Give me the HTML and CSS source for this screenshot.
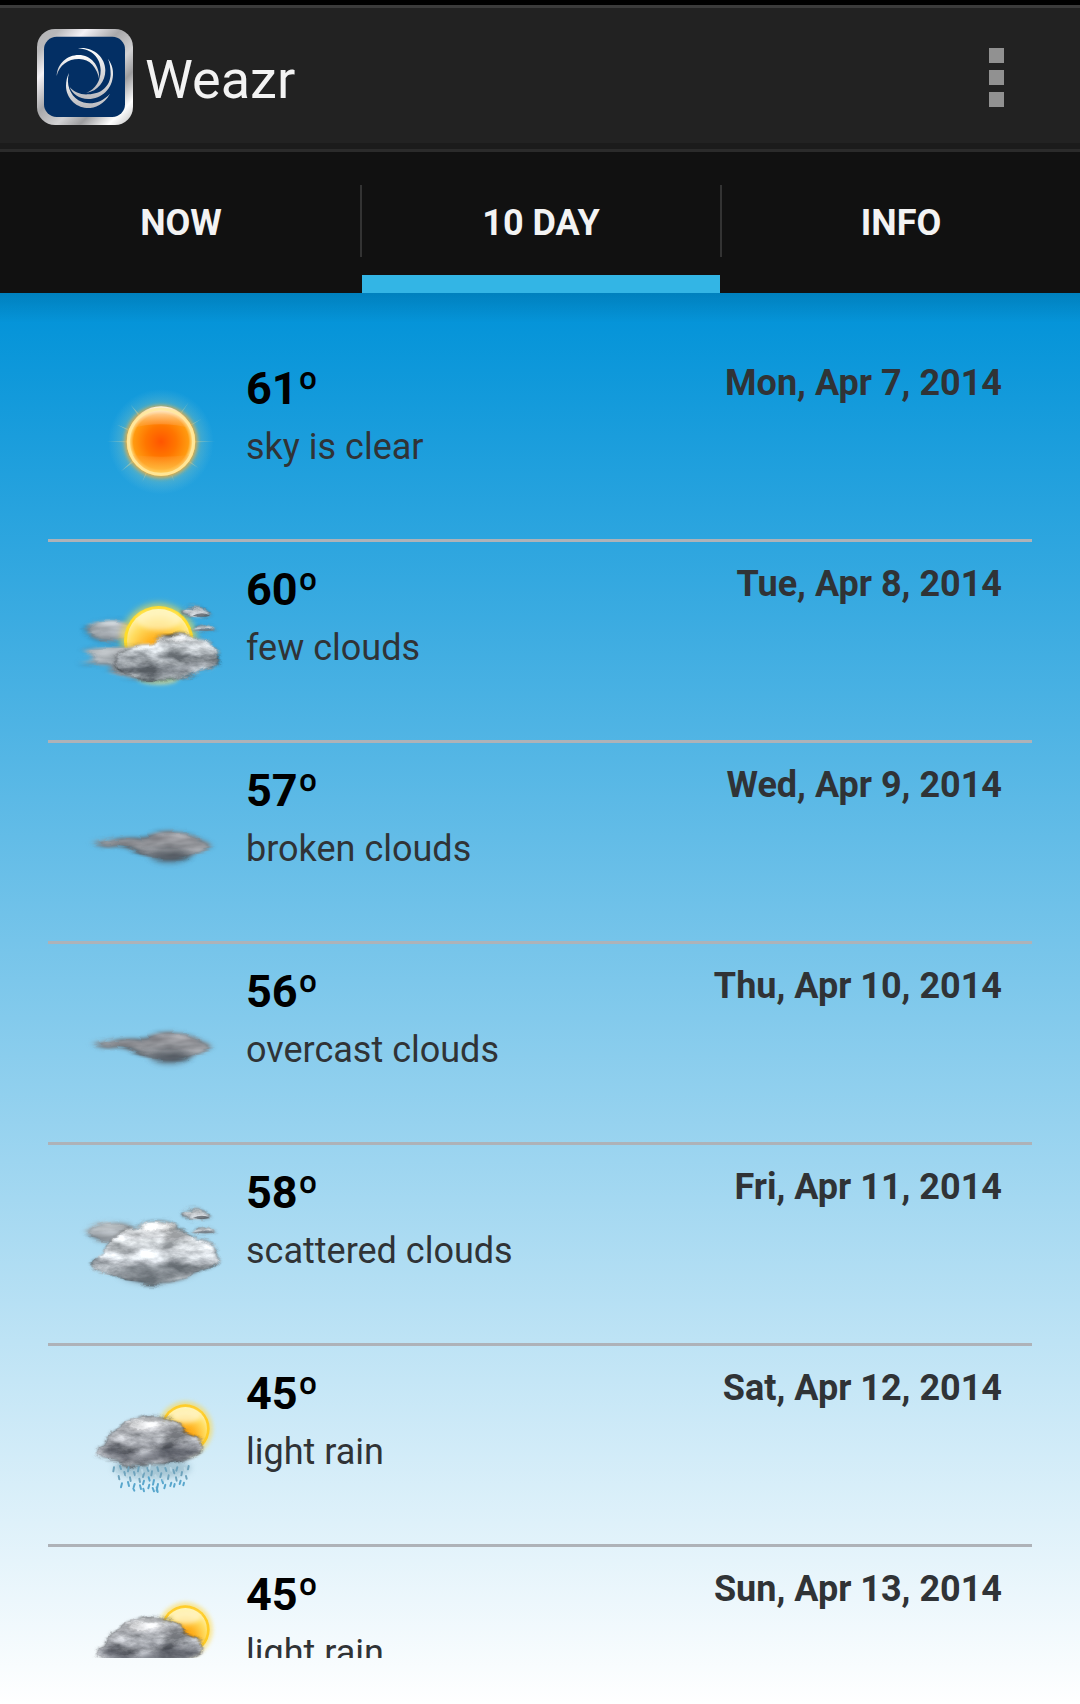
FILE: index.html
```html
<!DOCTYPE html>
<html lang="en">
<head>
<meta charset="utf-8">
<meta name="viewport" content="width=device-width, initial-scale=1">
<title>Weazr</title>
<link rel="stylesheet" href="styles.css">
</head>
<body>
<svg class="defs" width="0" height="0" aria-hidden="true">
  <defs>
    <radialGradient id="sunGlow">
      <stop offset=".62" stop-color="#ffd878" stop-opacity=".95"/>
      <stop offset=".74" stop-color="#cfd8a0" stop-opacity=".5"/>
      <stop offset="1" stop-color="#9fd8e0" stop-opacity="0"/>
    </radialGradient>
    <radialGradient id="hotSun">
      <stop offset="0" stop-color="#ff5500"/>
      <stop offset=".45" stop-color="#ff7600"/>
      <stop offset=".8" stop-color="#ff9a10"/>
      <stop offset=".92" stop-color="#ffdf85"/>
      <stop offset="1" stop-color="#ffcf60"/>
    </radialGradient>
    <linearGradient id="sunGloss" x1="0" y1="0" x2="0" y2="1">
      <stop offset="0" stop-color="#fff8e8" stop-opacity=".95"/>
      <stop offset="1" stop-color="#ffb070" stop-opacity=".1"/>
    </linearGradient>
    <linearGradient id="sunFoot" x1="0" y1="0" x2="0" y2="1">
      <stop offset="0" stop-color="#ffa040" stop-opacity=".2"/>
      <stop offset="1" stop-color="#ffce50" stop-opacity=".9"/>
    </linearGradient>
    <radialGradient id="softSun" cx=".5" cy=".68" r=".68">
      <stop offset="0" stop-color="#ff9c08"/>
      <stop offset=".35" stop-color="#ffb424"/>
      <stop offset=".7" stop-color="#ffdc60"/>
      <stop offset="1" stop-color="#fff6b8"/>
    </radialGradient>
    <linearGradient id="paleCloud" x1="0" y1="0" x2="0" y2="1">
      <stop offset="0" stop-color="#eceeef"/>
      <stop offset=".5" stop-color="#c9ced3"/>
      <stop offset=".8" stop-color="#9fa5ab"/>
      <stop offset="1" stop-color="#b3bac0"/>
    </linearGradient>
    <linearGradient id="grayCloud" x1="0" y1="0" x2="0" y2="1">
      <stop offset="0" stop-color="#d0d4d7"/>
      <stop offset=".4" stop-color="#adb3b8"/>
      <stop offset=".8" stop-color="#92989e"/>
      <stop offset="1" stop-color="#a9b0b5"/>
    </linearGradient>
    <linearGradient id="rainCloud" x1="0" y1="0" x2="0" y2="1">
      <stop offset="0" stop-color="#d3d5d8"/>
      <stop offset=".5" stop-color="#adb0b6"/>
      <stop offset=".8" stop-color="#7c7f86"/>
      <stop offset="1" stop-color="#a2a5aa"/>
    </linearGradient>
    <linearGradient id="darkCloud" x1="0" y1="0" x2="0" y2="1">
      <stop offset="0" stop-color="#a3a2a7"/>
      <stop offset=".5" stop-color="#8e9095"/>
      <stop offset=".8" stop-color="#6b7178"/>
      <stop offset="1" stop-color="#7d868e"/>
    </linearGradient>
    <filter id="blur2" x="-30%" y="-30%" width="160%" height="160%"><feGaussianBlur stdDeviation="2"/></filter>
    <filter id="blur6" x="-40%" y="-60%" width="180%" height="220%"><feGaussianBlur stdDeviation="6"/></filter>
    <filter id="blur10" x="-40%" y="-60%" width="180%" height="220%"><feGaussianBlur stdDeviation="10"/></filter>
    <filter id="billow" x="-15%" y="-15%" width="130%" height="130%" color-interpolation-filters="sRGB">
      <feTurbulence type="fractalNoise" baseFrequency=".013 .028" numOctaves="5" seed="8" result="n"/>
      <feGaussianBlur in="SourceGraphic" stdDeviation="4" result="s"/>
      <feDisplacementMap in="s" in2="n" scale="26" xChannelSelector="R" yChannelSelector="G" result="d"/>
      <feColorMatrix in="n" type="matrix" values="0 0 1.8 0 -.4  0 0 1.8 0 -.4  0 0 1.8 0 -.4  0 0 0 0 1" result="g"/>
      <feComposite in="d" in2="g" operator="arithmetic" k2="1" k3=".5" k4="-.25" result="m"/>
      <feComposite in="m" in2="d" operator="in"/>
    </filter>
    <filter id="wisp" x="-20%" y="-40%" width="140%" height="180%" color-interpolation-filters="sRGB">
      <feTurbulence type="fractalNoise" baseFrequency=".008 .03" numOctaves="3" seed="3" result="n"/>
      <feGaussianBlur in="SourceGraphic" stdDeviation="10 6" result="s"/>
      <feDisplacementMap in="s" in2="n" scale="18" xChannelSelector="R" yChannelSelector="G" result="d"/>
      <feColorMatrix in="n" type="matrix" values="0 0 1.5 0 -.25  0 0 1.5 0 -.25  0 0 1.5 0 -.25  0 0 0 0 1" result="g"/>
      <feComposite in="d" in2="g" operator="arithmetic" k2="1" k3=".25" k4="-.12" result="m"/>
      <feComposite in="m" in2="d" operator="in"/>
    </filter>

    <symbol id="clear" viewBox="66 0 180 198">
      <g transform="translate(40 -1) scale(.3333)">
        <circle cx="363" cy="305" r="158" fill="url(#sunGlow)" opacity=".45"/>
        <path d="M200 305l163-4 163 4-163 4zM272 194l91 100 84-108-76 112 114-62-108 70 98 78-106-66 34 108-44-104-52 104 40-108-104 76 92-86-104-54 114 44z" fill="#ffe6a0" opacity=".35" filter="url(#blur2)"/>
        <circle cx="363" cy="305" r="108" fill="#f0a830" opacity=".9" filter="url(#blur6)"/>
        <circle cx="363" cy="305" r="103" fill="url(#hotSun)"/>
        <path d="M270 266a98 98 0 0 1 186 0q-93-26-186 0z" fill="url(#sunGloss)"/>
        <path d="M275 344a94 94 0 0 0 176 0q-88 12-176 0z" fill="url(#sunFoot)"/>
        <circle cx="363" cy="305" r="98" fill="none" stroke="#ffeaa0" stroke-width="9" opacity=".85" filter="url(#blur2)"/>
      </g>
    </symbol>

    <symbol id="puffs" viewBox="0 0 600 390">
      <g filter="url(#billow)">
        <path d="M356 132q14-24 44-23 30-2 40 12 14 8 16 16-30 8-60 4-26 0-40-9z" fill="url(#paleCloud)"/>
        <path d="M392 178q14-18 42-14 26 0 36 14-16 10-40 8-26 0-38-8z" fill="url(#paleCloud)"/>
      </g>
      <path d="M398 137q30-14 52 0-24 7-52 0z" fill="#4d525a" opacity=".7" filter="url(#blur2)"/>
      <path d="M400 180q36-8 66 0-30 6-66 0z" fill="#6b7178" opacity=".6" filter="url(#blur2)"/>
    </symbol>

    <symbol id="few" viewBox="66 0 180 198">
      <g transform="translate(60 28) scale(.3333)">
        <path d="M70 180q30-34 80-34 50-2 74 20v44q-60 12-104 4-30-8-50-34z" fill="url(#grayCloud)" filter="url(#wisp)"/>
        <circle cx="296" cy="214" r="114" fill="#ffe040" opacity=".65" filter="url(#blur10)"/>
        <circle cx="296" cy="212" r="104" fill="#ffdc2a" filter="url(#blur2)"/>
        <circle cx="296" cy="212" r="95" fill="url(#softSun)" filter="url(#blur2)"/>
        <ellipse cx="296" cy="150" rx="66" ry="30" fill="#fffbe0" opacity=".5" filter="url(#blur6)"/>
        <path d="M225 320q70 26 140-4l-20 20q-50 14-100 0z" fill="#f4e38a" opacity=".8" filter="url(#blur6)"/>
        <path d="M66 240q60-16 160-10 100 0 180 20l-20 50q-80 44-170 26-60-12-80-28 20 0 10-10-40 0-96-6 60-12 46-18-20-14-30-24z" fill="url(#grayCloud)" filter="url(#wisp)"/>
        <path d="M170 244q50-26 114-24 10-22 48-24 40-16 70 6 46-4 60 24 16 20 14 44 0 24-40 30-40 30-130 32-80 4-130-22-30-34-6-66z" fill="url(#grayCloud)" filter="url(#billow)"/>
        <path d="M190 282q90 34 240-10-50 46-130 46-80-6-110-36z" fill="#5d646c" opacity=".35" filter="url(#blur10)"/>
        <path d="M285 208q12-18 30-10l10 2q40-18 70 6l-50 14q-30 2-60-12z" fill="#eef1f3" opacity=".75" filter="url(#billow)"/>
        <use href="#puffs" width="600" height="390"/>
      </g>
    </symbol>

    <symbol id="overcast" viewBox="66 0 180 198">
      <g transform="translate(60 57) scale(.3333)">
        <path d="M84 128q60-14 100-20 30-4 70 2 40-20 90-18 54 0 80 22 26 6 34 18-10 20-50 32-50 28-110 18-56-10-86-34-30-14-64-4-30-4-64-16z" fill="url(#darkCloud)" filter="url(#wisp)"/>
        <path d="M265 164q60-20 130 0-20 24-70 24-40 0-60-24z" fill="#4a5058" opacity=".6" filter="url(#blur10)"/>
      </g>
    </symbol>

    <symbol id="scattered" viewBox="66 0 180 198">
      <g transform="translate(60 35) scale(.3333)">
        <path d="M72 152q30-30 80-30 60-4 74 20l-20 44q-60 12-90 0-30-12-44-34z" fill="url(#grayCloud)" filter="url(#wisp)"/>
        <path d="M86 262q10-20 46-36-2-44 40-58 20-24 60-24 10-28 60-26 50-2 58 30 36 0 60 30 50 2 60 34 16 20 0 44-30 14-60 26-50 34-120 32-70 0-114-24-60-4-90-28z" fill="url(#paleCloud)" filter="url(#billow)"/>
        <path d="M170 280q60-40 140-20 60 0 120-10-20 40-80 44-40 24-100 14-50 0-80-28z" fill="#646a71" opacity=".5" filter="url(#blur10)"/>
        <path d="M235 150q10-28 55-26 44 0 52 26-20 12-50 4-30 6-57-4z" fill="#fff" opacity=".6" filter="url(#billow)"/>
        <g transform="translate(0 -23)"><use href="#puffs" width="600" height="390"/></g>
      </g>
    </symbol>

    <symbol id="rain" viewBox="66 0 180 198">
      <g transform="translate(60 34) scale(.3333)">
        <circle cx="376" cy="146" r="82" fill="#ffd84c" opacity=".6" filter="url(#blur6)"/>
        <circle cx="376" cy="146" r="73" fill="#ffcc25" filter="url(#blur2)"/>
        <circle cx="376" cy="146" r="65" fill="url(#softSun)" filter="url(#blur2)"/>
        <ellipse cx="378" cy="108" rx="44" ry="20" fill="#fffbe6" opacity=".6" filter="url(#blur6)"/>
        <ellipse cx="276" cy="264" rx="116" ry="32" fill="#779fb0" opacity=".5" filter="url(#blur10)"/>
        <path d="M106 222q2-22 24-30 4-30 36-38 20-36 64-40 40-22 84-2 40 6 56 38 44 10 62 44-2 34-44 42-60 22-120 16-60 12-100-8-50-2-62-22z" fill="url(#rainCloud)" filter="url(#billow)"/>
        <path d="M128 214q30-22 60 6 40 20 80-2 50-30 150-14-20 30-80 30-60 20-130 10-50 0-80-30z" fill="#343842" opacity=".45" filter="url(#blur6)"/>
        <path d="M200 142q30-26 60-24 40-8 60 16-20 10-50 8-40 20-70 0z" fill="#fff" opacity=".5" filter="url(#billow)"/>
        <g fill="none" stroke-linecap="round" stroke-width="6">
          <path stroke="#6ea3bc" d="M162 262l-2 12M180 258l3 9M176 288l2 10M193 276l3 10M206 262l-2 12M210 292l2 11M222 276l3 10M236 262l-2 12M238 296l2 10M252 280l-3 11M262 264l3 9M276 274l-2 12M292 262l3 11M304 280l-3 11M316 264l3 9M326 286l-2 11M340 270l3 10M352 262l-3 10M348 292l2 10M366 276l-2 10M378 288l2 8M386 258l-2 10"/>
          <path stroke="#58a6cc" d="M186 310l-3 12M204 306l3 12M224 312l-3 10M220 326l3 6M240 316l3 11M252 302l-3 11M250 326l2 8M266 292l3 10M268 314l-3 11M282 300l-3 14M278 324l4 10M294 312l-4 20M290 322l3 14M306 300l3 10M316 314l-3 11M334 308l-3 10M344 312l-2 8M362 302l-3 10M372 308l-2 8"/>
          <path stroke="#bcd8e5" d="M170 268l2 8M200 284l2 8M230 284l-2 9M246 270l2 8M270 256l-2 10M286 286l3 8M312 292l-2 8M332 264l2 8M358 282l-2 8M374 264l2 8"/>
        </g>
      </g>
    </symbol>
  </defs>
</svg>

<header class="app-bar">
  <svg class="logo" viewBox="111 87 288 288" aria-hidden="true">
    <defs>
      <linearGradient id="silver" x1="0" y1="0" x2="1" y2="1">
        <stop offset="0" stop-color="#b4b4b6"/>
        <stop offset=".12" stop-color="#b8b8ba"/>
        <stop offset=".26" stop-color="#f4f2f6"/>
        <stop offset=".44" stop-color="#a8a8aa"/>
        <stop offset=".6" stop-color="#d2d2d4"/>
        <stop offset=".72" stop-color="#9d9d9f"/>
        <stop offset=".87" stop-color="#fff"/>
        <stop offset="1" stop-color="#bbb"/>
      </linearGradient>
      <linearGradient id="swirl" x1="0" y1="0" x2="0" y2="1">
        <stop offset="0" stop-color="#fff"/>
        <stop offset="1" stop-color="#b9b9bd"/>
      </linearGradient>
    </defs>
    <rect x="111" y="87" width="288" height="288" rx="54" fill="url(#silver)"/>
    <rect x="132" y="110" width="243" height="241" rx="38" fill="#032f64"/>
    <g fill="url(#swirl)">
      <path d="M170 228C172 190 202 165 236 165c36 0 64 30 62 75-6-38-30-64-62-63-32 0-58 18-66 51z"/>
      <path d="M234 145c44-6 82 26 82 66 0 34-22 62-57 68 28-12 43-36 43-68 0-36-26-64-68-66z"/>
      <path d="M324 176c12 18 16 32 15 49-2 42-34 72-74 72-28 0-48-16-56-36 14 16 34 24 56 22 40 0 66-26 67-60 0-18-2-32-8-47z"/>
      <path d="M207 219c-10 34 4 66 28 82 30 18 70 8 95-20-18 34-48 44-70 43-34-2-62-32-62-66 0-14 3-28 9-39z"/>
    </g>
  </svg>
  <h1 class="title">Weazr</h1>
  <button class="menu" type="button" aria-label="More options"><i></i><i></i><i></i></button>
</header>

<nav class="tabs" role="tablist">
  <button class="tab" type="button" role="tab" aria-selected="false">NOW</button>
  <span class="tab-divider"></span>
  <button class="tab" type="button" role="tab" aria-selected="true">10 DAY</button>
  <span class="tab-divider"></span>
  <button class="tab" type="button" role="tab" aria-selected="false">INFO</button>
</nav>

<main class="forecast">
  <ul class="days">
    <li class="day">
      <svg class="icon" aria-hidden="true"><use href="#clear"/></svg>
      <div class="weather"><strong class="temp">61º</strong><span class="sky">sky is clear</span></div>
      <time class="date" datetime="2014-04-07">Mon, Apr 7, 2014</time>
    </li>
    <li class="day">
      <svg class="icon" aria-hidden="true"><use href="#few"/></svg>
      <div class="weather"><strong class="temp">60º</strong><span class="sky">few clouds</span></div>
      <time class="date" datetime="2014-04-08">Tue, Apr 8, 2014</time>
    </li>
    <li class="day">
      <svg class="icon" aria-hidden="true"><use href="#overcast"/></svg>
      <div class="weather"><strong class="temp">57º</strong><span class="sky">broken clouds</span></div>
      <time class="date" datetime="2014-04-09">Wed, Apr 9, 2014</time>
    </li>
    <li class="day">
      <svg class="icon" aria-hidden="true"><use href="#overcast"/></svg>
      <div class="weather"><strong class="temp">56º</strong><span class="sky">overcast clouds</span></div>
      <time class="date" datetime="2014-04-10">Thu, Apr 10, 2014</time>
    </li>
    <li class="day">
      <svg class="icon" aria-hidden="true"><use href="#scattered"/></svg>
      <div class="weather"><strong class="temp">58º</strong><span class="sky">scattered clouds</span></div>
      <time class="date" datetime="2014-04-11">Fri, Apr 11, 2014</time>
    </li>
    <li class="day">
      <svg class="icon" aria-hidden="true"><use href="#rain"/></svg>
      <div class="weather"><strong class="temp">45º</strong><span class="sky">light rain</span></div>
      <time class="date" datetime="2014-04-12">Sat, Apr 12, 2014</time>
    </li>
    <li class="day">
      <svg class="icon" aria-hidden="true"><use href="#rain"/></svg>
      <div class="weather"><strong class="temp">45º</strong><span class="sky">light rain</span></div>
      <time class="date" datetime="2014-04-13">Sun, Apr 13, 2014</time>
    </li>
  </ul>
</main>
</body>
</html>
```
FILE: styles.css
```css
* {
  box-sizing: border-box;
}

body {
  display: flex;
  flex-direction: column;
  height: 100vh;
  margin: 0;
  padding-top: 5px;
  overflow: hidden;
  background: #000;
  font-family: Roboto, "Liberation Sans", sans-serif;
}

.defs {
  position: absolute;
}

button {
  margin: 0;
  padding: 0;
  border: 0;
  background: none;
  font: inherit;
  color: inherit;
}

/* App bar */
.app-bar {
  display: flex;
  flex: none;
  align-items: center;
  padding: 6px 56px 9px 37px;
  height: 147px;
  border-top: 3px solid #3b3b3b;
  border-bottom: 3px solid #2b2b2b;
  background: #222;
  box-shadow: inset 0 -6px #1b1b1b;
  color: #f3f3f3;
}

.logo {
  width: 96px;
  height: 96px;
}

.title {
  flex: 1;
  margin: 0;
  padding: 5px 0 0 12px;
  font-size: 54px;
  font-weight: 400;
  line-height: 64px;
}

.menu {
  display: flex;
  flex-direction: column;
  gap: 7px;
  padding: 20px;
}

.menu i {
  width: 15px;
  height: 15px;
  background: #919191;
}

/* Tabs */
.tabs {
  display: flex;
  flex: none;
  height: 141px;
  padding-left: 2px;
  background: #111;
}

.tab {
  flex: 1;
  border-top: 18px solid transparent;
  border-bottom: 18px solid transparent;
  color: #f3f3f3;
  font-size: 36px;
  font-weight: 700;
  line-height: 42px;
}

.tab[aria-selected="true"] {
  border-bottom-color: #33b5e5;
}

.tab-divider {
  width: 2px;
  height: 72px;
  margin-top: 33px;
  background: #333;
}

/* Forecast */
.forecast {
  display: flex;
  flex: 1;
  min-height: 0;
  padding: 48px 48px 46px;
  background:
    linear-gradient(rgba(0, 0, 0, .12), rgba(0, 0, 0, 0)) top / 100% 30px no-repeat,
    linear-gradient(#0092d8, #fff);
}

.days {
  flex: 1;
  margin: 0;
  padding: 0;
  overflow: hidden;
  list-style: none;
}

.day {
  display: flex;
  height: 201px;
  padding: 0 30px 0 18px;
  border-bottom: 3px solid #aeb2b8;
}

.icon {
  flex: none;
  width: 180px;
  height: 198px;
}

.weather {
  display: flex;
  flex: 1;
  flex-direction: column;
  gap: 10px;
  padding-top: 21px;
}

.temp {
  color: #000;
  font-size: 45px;
  line-height: 54px;
}

.sky,
.date {
  color: #303336;
  font-size: 36px;
  line-height: 42px;
}

.date {
  padding-top: 21px;
  font-weight: 700;
}
```
